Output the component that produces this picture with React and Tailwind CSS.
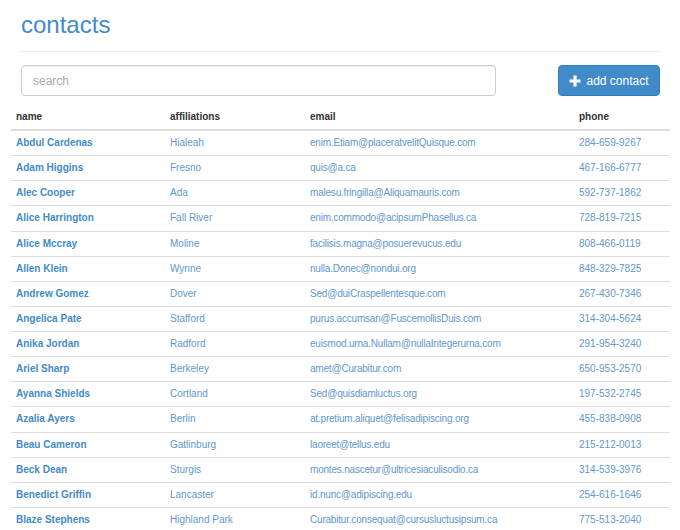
const contacts = [
  ['Abdul Cardenas', 'Hialeah', 'enim.Etiam@placeratvelitQuisque.com', '284-659-9267'],
  ['Adam Higgins', 'Fresno', 'quis@a.ca', '467-166-6777'],
  ['Alec Cooper', 'Ada', 'malesu.fringilla@Aliquamauris.com', '592-737-1862'],
  ['Alice Harrington', 'Fall River', 'enim.commodo@acipsumPhasellus.ca', '728-819-7215'],
  ['Alice Mccray', 'Moline', 'facilisis.magna@posuerevucus.edu', '808-466-0119'],
  ['Allen Klein', 'Wynne', 'nulla.Donec@nondui.org', '848-329-7825'],
  ['Andrew Gomez', 'Dover', 'Sed@duiCraspellentesque.com', '267-430-7346'],
  ['Angelica Pate', 'Stafford', 'purus.accumsan@FuscemollisDuis.com', '314-304-5624'],
  ['Anika Jordan', 'Radford', 'euismod.urna.Nullam@nullaIntegerurna.com', '291-954-3240'],
  ['Ariel Sharp', 'Berkeley', 'amet@Curabitur.com', '650-953-2570'],
  ['Ayanna Shields', 'Cortland', 'Sed@quisdiamluctus.org', '197-532-2745'],
  ['Azalia Ayers', 'Berlin', 'at.pretium.aliquet@felisadipiscing.org', '455-838-0908'],
  ['Beau Cameron', 'Gatlinburg', 'laoreet@tellus.edu', '215-212-0013'],
  ['Beck Dean', 'Sturgis', 'montes.nascetur@ultricesiaculisodio.ca', '314-539-3976'],
  ['Benedict Griffin', 'Lancaster', 'id.nunc@adipiscing.edu', '254-616-1646'],
  ['Blaze Stephens', 'Highland Park', 'Curabitur.consequat@cursusluctusipsum.ca', '775-513-2040'],
];

function PlusIcon() {
  return (
    <svg width="12" height="12" viewBox="0 0 12 12" className="shrink-0">
      <path d="M4.4 0.5h3.2v3.9h3.9v3.2H7.6v3.9H4.4V7.6H0.5V4.4h3.9z" fill="#fff" />
    </svg>
  );
}

export default function App() {
  return (
    <div className="h-[530px] overflow-hidden bg-white font-['Liberation_Sans',Arial,sans-serif] text-[#333]">
      <div className="pl-[21px] pr-[20px] pt-[10px]">
        <h1 className="text-[24px] leading-[30px] text-[#428bca]">contacts</h1>
        <div className="mt-[11px] h-px bg-[#eee]" />
        <div className="mt-[13px] flex items-center justify-between">
          <input
            type="text"
            placeholder="search"
            className="h-[31px] w-[475px] rounded-[4px] border border-[#ccc] px-[11px] text-[12px] text-[#555] placeholder:text-[#aaa] shadow-[inset_0_1px_1px_rgba(0,0,0,0.075)] outline-none"
          />
          <button className="flex h-[31px] w-[102px] items-center justify-center gap-[5px] rounded-[4px] border border-[#357ebd] bg-[#428bca] text-[12px] text-white">
            <PlusIcon />
            <span>add contact</span>
          </button>
        </div>
      </div>
      <table className="mx-[11px] mt-[9px] w-[659px] table-fixed border-collapse text-[10px] leading-[14px]">
        <colgroup>
          <col className="w-[154px]" />
          <col className="w-[140px]" />
          <col className="w-[269px]" />
          <col />
        </colgroup>
        <thead>
          <tr className="border-b-2 border-[#ddd]">
            <th className="px-[5px] py-[5px] text-left font-bold text-[#333]">name</th>
            <th className="px-[5px] py-[5px] text-left font-bold text-[#333]">affiliations</th>
            <th className="px-[5px] py-[5px] text-left font-bold text-[#333]">email</th>
            <th className="px-[5px] py-[5px] text-left font-bold text-[#333]">phone</th>
          </tr>
        </thead>
        <tbody className="leading-[14.13px]">
          {contacts.map(([name, city, email, phone]) => (
            <tr key={name} className="border-b border-[#ddd]">
              <td className="px-[5px] py-[5px] font-bold text-[#428bca]">{name}</td>
              <td className="px-[5px] py-[5px] text-[#5f97cf]">{city}</td>
              <td className="px-[5px] py-[5px] tracking-[-0.2px] text-[#5f97cf]">{email}</td>
              <td className="px-[5px] py-[5px] text-[#5f97cf]">{phone}</td>
            </tr>
          ))}
        </tbody>
      </table>
    </div>
  );
}
